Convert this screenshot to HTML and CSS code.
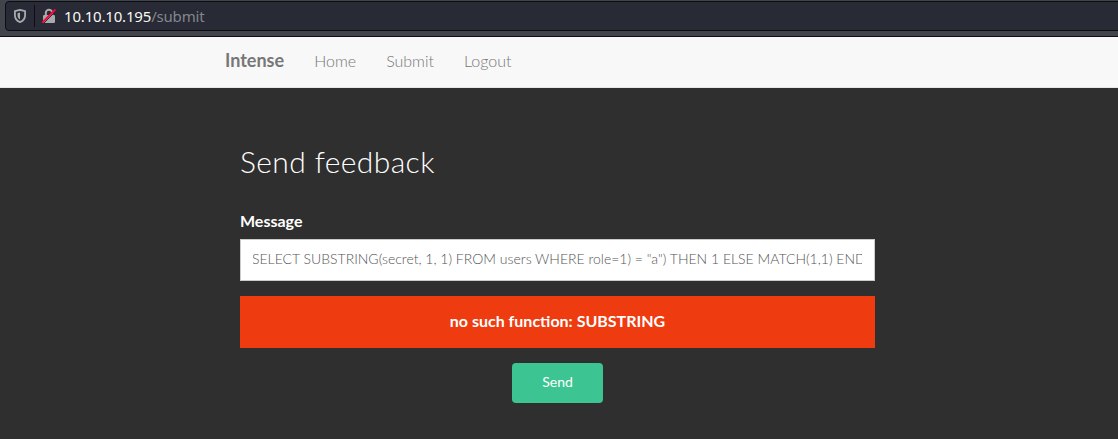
FILE: index.html
```html
<!DOCTYPE html>
<html lang="en">
<head>
<meta charset="utf-8">
<title>Intense</title>
<link rel="stylesheet" href="styles.css">
</head>
<body>
<header class="browser">
  <div class="urlbar">
    <svg class="shield" width="12" height="14" viewBox="0 0 12 14"><path d="M6 .9 11.1 2.1V6C11.1 9.600 9 12 6 13.100 3 12 .9 9.600 .9 6V2.100Z" fill="none" stroke="#a9aaad" stroke-width="1.800" stroke-linejoin="round"/><path d="M6 3.500V10.600C4.300 9.600 3.500 8.200 3.500 6V4.200Z" fill="#a9aaad"/></svg>
    <span class="divider"></span>
    <svg class="lock" width="16" height="16" viewBox="0 0 16 16"><path d="M4.800 8V5a3.200 3.200 0 0 1 6.400 0V8" fill="none" stroke="#a9aaad" stroke-width="2"/><rect x="2" y="7" width="12" height="8" rx="1.200" fill="#a9aaad"/><path d="M2.300 15.700 15.300 2.700" stroke="#282a36" stroke-width="1"/><path d="M1.200 14.700 14.400 1.500" stroke="#ff0039" stroke-width="1.900"/></svg>
    <span class="url"><span class="host">10.10.10.195</span>/submit</span>
  </div>
</header>
<nav class="navbar">
  <a class="brand">Intense</a>
  <a class="link">Home</a>
  <a class="link">Submit</a>
  <a class="link">Logout</a>
</nav>
<main class="content">
  <h1 class="title">Send feedback</h1>
  <label class="label">Message</label>
  <div class="field"><div class="value">SELECT SUBSTRING(secret, 1, 1) FROM users WHERE role=1) = "a") THEN 1 ELSE MATCH(1,1) END</div></div>
  <div class="alert">no such function: SUBSTRING</div>
  <button class="send">Send</button>
</main>
</body>
</html>
```
FILE: styles.css
```css
* { box-sizing: border-box; }
body { margin: 0; height: 439px; overflow: hidden; display: flex; flex-direction: column; background: #2f2f2f; font-family: Lato, sans-serif; }
.browser { height: 37px; flex: none; background: #42444c; border-bottom: 1px solid #0c0e14; padding: 1px 0 0 5px; }
.urlbar { height: 30px; width: 1130px; border: 1px solid #0c0e14; border-radius: 4px; background: #282a36; display: flex; align-items: center; padding-left: 8px; }
.divider { width: 1px; height: 22px; background: #0c0e14; margin: 0 6px 0 8px; }
.shield, .lock { flex: none; }
.url { margin-left: 7px; font: 15px/22px "Noto Sans", sans-serif; letter-spacing: -.18px; color: #85868d; }
.host { color: #f8f8f2; }
.navbar { height: 51px; flex: none; background: #f8f8f8; border-bottom: 1px solid #e7e7e7; display: flex; gap: 30px; padding-left: 225px; color: #777; }
.brand { font-size: 18px; font-weight: 700; line-height: 46px; }
.link { font-size: 16px; font-weight: 300; line-height: 47px; }
.content { flex: 1; width: 635px; margin-left: 240px; display: flex; flex-direction: column; color: #fff; }
.title { margin: 56px 0 0; font-size: 30px; line-height: 34px; font-weight: 300; letter-spacing: .4px; white-space: nowrap; }
.label { margin-top: 32px; font-size: 16px; line-height: 22px; font-weight: 700; }
.field { margin-top: 7px; height: 42px; flex: none; background: #fff; border: 1px solid #ccc; padding: 0 12px 0 12px; }
.value { overflow: hidden; white-space: nowrap; text-indent: -1px; color: #555; font-size: 14px; font-weight: 300; line-height: 37px; }
.alert { margin-top: 15px; height: 52px; flex: none; background: #ee3b0f; text-align: center; font-size: 16px; font-weight: 700; line-height: 49px; }
.send { align-self: center; margin: 15px 0 0; width: 91px; height: 40px; border: 0; border-radius: 4px; background: #3cc492; color: #fff; font: 14px/20px Lato, sans-serif; padding: 0 0 2px; }
```
